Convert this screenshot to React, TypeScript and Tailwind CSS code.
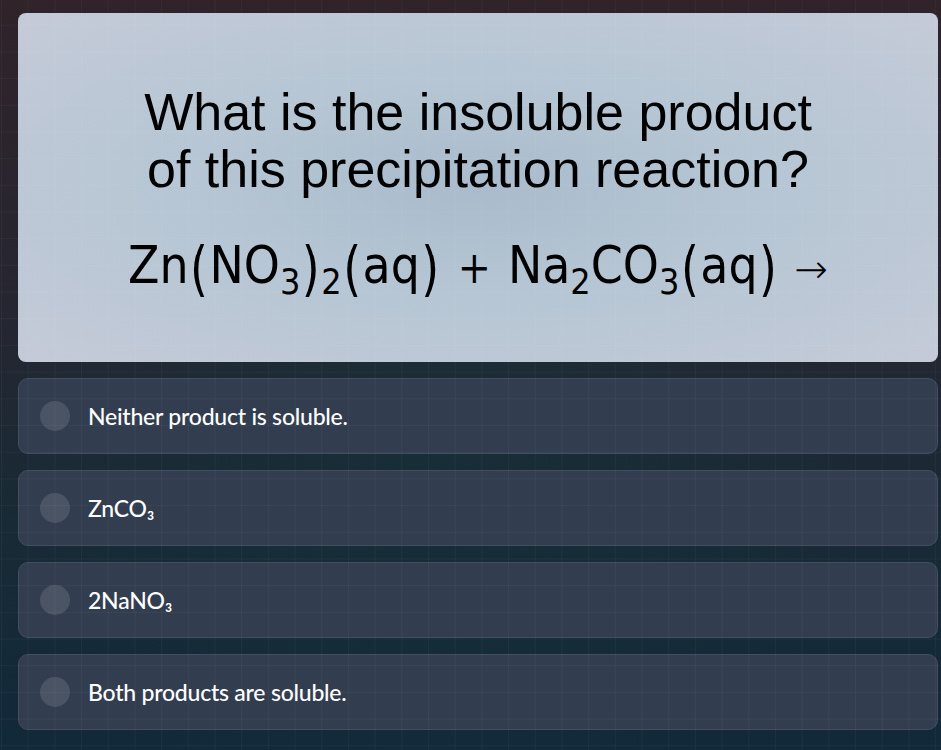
import React from "react";

type Option = { id: string; label: string };

const options: Option[] = [
  { id: "a", label: "Neither product is soluble." },
  { id: "b", label: "ZnCO₃" },
  { id: "c", label: "2NaNO₃" },
  { id: "d", label: "Both products are soluble." },
];

function Sub({ children }: { children: React.ReactNode }) {
  return <span className="relative top-[0.3em] text-[0.7em] leading-none">{children}</span>;
}

function Paren({ children }: { children: React.ReactNode }) {
  return (
    <span className="mx-[1.5px] inline-block translate-y-[3px] scale-y-[1.2] font-light leading-none">
      {children}
    </span>
  );
}

// reaction line, drawn like a KaTeX \mathsf equation
function Equation() {
  return (
    <div className="mt-[42px] flex items-baseline whitespace-nowrap font-['DejaVu_Sans_Condensed','DejaVu_Sans',sans-serif] text-[51px] leading-none text-black [font-stretch:condensed]">
      <span>Zn</span>
      <Paren>(</Paren>
      <span>NO</span>
      <Sub>3</Sub>
      <Paren>)</Paren>
      <Sub>2</Sub>
      <Paren>(</Paren>
      <span>aq</span>
      <Paren>)</Paren>
      <span className="mx-[17px] font-['DejaVu_Serif',serif] text-[44px]">+</span>
      <span>Na</span>
      <Sub>2</Sub>
      <span>CO</span>
      <Sub>3</Sub>
      <Paren>(</Paren>
      <span>aq</span>
      <Paren>)</Paren>
      <span className="ml-[16px] font-['DejaVu_Sans',sans-serif] text-[40px] font-light">→</span>
    </div>
  );
}

export default function App() {
  return (
    <div className="relative h-[750px] w-[941px] overflow-hidden bg-[linear-gradient(180deg,#30232a_0%,#262631_40%,#182a35_70%,#12293a_100%)] font-['Lato',sans-serif]">
      <div className="pointer-events-none absolute inset-0 bg-[radial-gradient(ellipse_at_45%_60%,rgba(20,50,58,0.55)_0%,rgba(20,40,50,0)_60%)]" />

      <div className="relative flex flex-col gap-4 pl-[18px] pt-[13px]">
        <div className="flex h-[349px] w-[920px] flex-col items-center rounded-lg bg-[radial-gradient(ellipse_at_50%_50%,#a9bbcc_0%,#b6c6d4_45%,#c5cad8_100%)] pt-[71px]">
          <h1 className="text-center font-['Liberation_Sans',Arial,sans-serif] text-[52px] font-normal leading-[57px] text-black">
            What is the insoluble product
            <br />
            of this precipitation reaction?
          </h1>
          <Equation />
        </div>

        {options.map((opt) => (
          <button
            key={opt.id}
            type="button"
            className="flex h-[76px] w-[920px] items-center gap-[18px] rounded-[10px] border border-[#424d5f] bg-[#323d4f] pl-[21px] text-left"
          >
            <span className="h-[30px] w-[30px] shrink-0 rounded-full bg-[#4a5465]" />
            <span className="text-[23px] font-medium tracking-[-0.01em] text-white">{opt.label}</span>
          </button>
        ))}
      </div>

      <div className="pointer-events-none absolute inset-0 bg-[linear-gradient(to_right,rgba(255,255,255,0.035)_1px,transparent_1px),linear-gradient(to_bottom,rgba(255,255,255,0.035)_1px,transparent_1px)] bg-[size:26.7px_26.7px] bg-[position:1px_-2px]" />
    </div>
  );
}
